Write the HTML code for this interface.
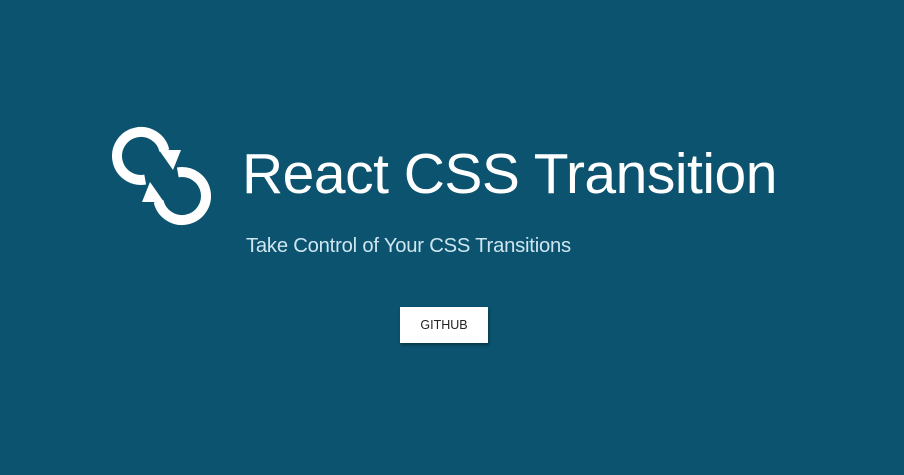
<!DOCTYPE html>
<html><head><style>
html,body{margin:0;padding:0}
body{width:904px;height:475px;background:#0b536f;position:relative;overflow:hidden;font-family:"Liberation Sans",sans-serif}
h1{position:absolute;left:242px;top:137px;margin:0;font-weight:normal;font-size:57px;color:#fff;line-height:74px;white-space:nowrap;letter-spacing:-0.5px}
.sub{position:absolute;left:246px;top:235px;font-size:20.2px;color:#cfe6f0;white-space:nowrap;letter-spacing:-0.2px}
.btn{position:absolute;left:400px;top:307px;width:88px;height:36px;background:#fff;box-shadow:1px 2px 3px rgba(0,0,0,.35);color:#222;font-size:12.5px;line-height:36px;text-align:center}
</style></head><body>
<svg width="904" height="475" style="position:absolute;left:0;top:0">
 <g fill="none" stroke="#fff" stroke-width="10">
  <path d="M145.2 179.6 A24 24 0 1 1 164.4 150.6"/>
  <path d="M145.2 179.6 A24 24 0 1 1 164.4 150.6" transform="rotate(180 161.5 176)"/>
 </g>
 <g fill="#fff">
  <polygon points="159,150 181,150 173,170"/>
  <polygon points="159,150 181,150 173,170" transform="rotate(180 161.5 176)"/>
 </g>
</svg>
<h1>React CSS Transition</h1>
<div class="sub">Take Control of Your CSS Transitions</div>
<div class="btn">GITHUB</div>
</body></html>
